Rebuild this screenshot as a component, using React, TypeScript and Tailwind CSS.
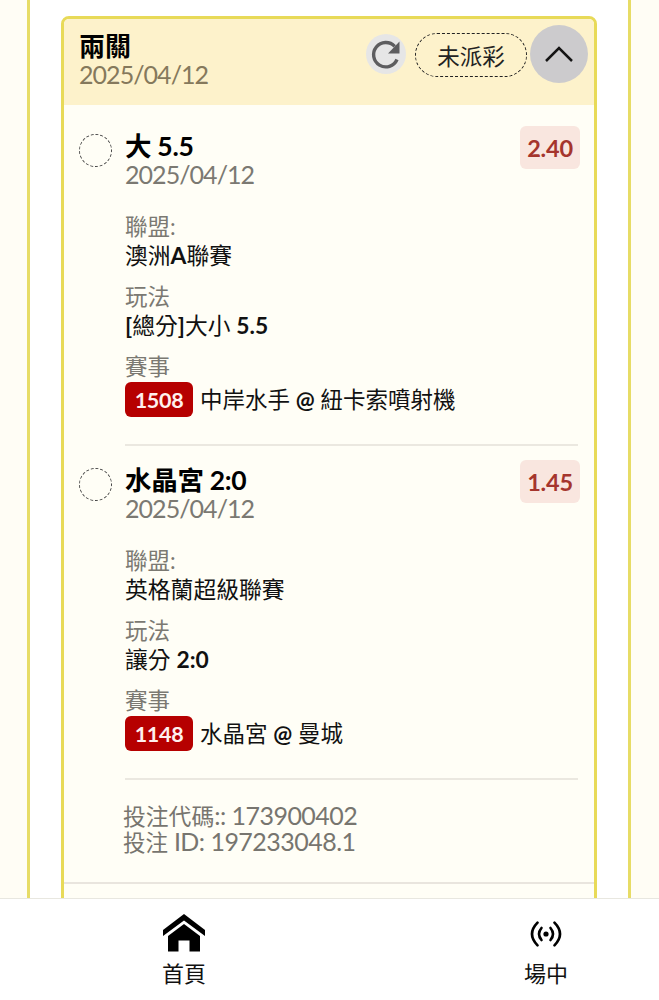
import type { ReactNode } from "react";

type Leg = {
    pick: ReactNode;
    date: string;
    odds: string;
    league: ReactNode;
    market: ReactNode;
    code: string;
    home: string;
    away: string;
};

const Num = ({ children }: { children: ReactNode }) => <span className="font-bold">{children}</span>;

const legs: Leg[] = [
    {
        pick: "大 5.5",
        date: "2025/04/12",
        odds: "2.40",
        league: <>澳洲<Num>A</Num>聯賽</>,
        market: <><Num>[</Num>總分<Num>]</Num>大小 <Num>5.5</Num></>,
        code: "1508",
        home: "中岸水手",
        away: "紐卡索噴射機",
    },
    {
        pick: "水晶宮 2:0",
        date: "2025/04/12",
        odds: "1.45",
        league: "英格蘭超級聯賽",
        market: <>讓分 <Num>2:0</Num></>,
        code: "1148",
        home: "水晶宮",
        away: "曼城",
    },
];

function Field({ label, children }: { label: string; children: ReactNode }) {
    return (
        <div className="text-[22.8px] leading-7">
            <div className="text-[22.5px] text-[#7b7972]">{label}</div>
            <div className="text-[#111]">{children}</div>
        </div>
    );
}

function BetLeg({ leg }: { leg: Leg }) {
    return (
        <section className="flex pr-[16px] pl-[15px]">
            <div className="mt-px h-[33px] w-[33px] shrink-0 rounded-full border border-dashed border-[#444]" />
            <div className="ml-[13px] flex-1 border-b-2 border-[#ebe8e0] pb-[27px]">
                <div className="-mt-px flex items-start justify-between">
                    <div>
                        <h3 className="text-[26.5px] leading-7 font-bold tracking-[-0.3px] text-black">{leg.pick}</h3>
                        <p className="text-[25px] leading-7 tracking-[-0.95px] text-[#7b7972]">{leg.date}</p>
                    </div>
                    <div className="-mt-[6px] -mr-[2px] flex h-[43px] w-[60px] items-center justify-center rounded-md bg-[#f9e6df] pt-[3px] text-[23.5px] font-bold tracking-[-0.2px] text-[#a5352d]">
                        {leg.odds}
                    </div>
                </div>
                <div className="mt-[25px] flex flex-col gap-[14px]">
                    <Field label="聯盟:">{leg.league}</Field>
                    <Field label="玩法">{leg.market}</Field>
                    <div className="text-[22.5px] leading-7">
                        <div className="text-[#7b7972]">賽事</div>
                        <div className="mt-px flex items-center text-[#111]">
                            <span className="mr-[7px] flex h-[35px] w-[68px] items-center justify-center rounded-md bg-[#b60000] text-[21.5px] font-bold tracking-[-0.3px] text-[#fff0ee]">
                                {leg.code}
                            </span>
                            <span className="pt-px">
                                {leg.home} <Num>@</Num> {leg.away}
                            </span>
                        </div>
                    </div>
                </div>
            </div>
        </section>
    );
}

function RefreshIcon() {
    return (
        <svg viewBox="0 0 40 40" className="h-10 w-10">
            <circle cx="20" cy="20" r="20" fill="#e6e6e6" />
            <path d="M28.7 12.3A12.200 12.200 0 1 0 31 25.5" fill="none" stroke="#5d5d5f" strokeWidth="3.400" />
            <path d="M33.500 7.5v12H22z" fill="#5d5d5f" />
        </svg>
    );
}

function HomeIcon() {
    return (
        <svg viewBox="0 0 42 38" className="h-[38px] w-[42px]">
            <path d="M21 0 42 16v6L21 6.5 0 22v-6z" />
            <path d="M21 10 37 22v15.500H26.500V26.500H15.500V37.500H5V22z" />
        </svg>
    );
}

function LiveIcon() {
    return (
        <svg viewBox="0 0 32 26" className="h-[26px] w-8" fill="none" stroke="#000" strokeWidth="2.600" strokeLinecap="round">
            <circle cx="16" cy="13" r="2.600" fill="#000" stroke="none" />
            <path d="M11.500 7Q6.500 13 11.500 19M20.500 7Q25.500 13 20.500 19" />
            <path d="M7.500 1.700Q-3.500 13 7.500 24.300M24.500 1.700Q35.500 13 24.500 24.300" />
        </svg>
    );
}

export default function App() {
    return (
        <div className="flex h-[1000px] w-[659px] flex-col overflow-hidden bg-[#fffdf5] font-['Lato','Noto_Sans_CJK_TC',sans-serif]">
            <main className="ml-[27px] h-[898px] w-[604px] shrink-0 overflow-hidden border-x-[3px] border-[#e7dc66] bg-white px-[31px] pt-[16px]">
                <article className="h-[950px] overflow-hidden rounded-t-lg border-[3px] border-[#e8da58] bg-[#fffef6]">
                    <header className="flex h-[86px] items-start justify-between bg-[#fdf2cb] pr-[6px] pl-[15px]">
                        <div className="pt-[13px]">
                            <h2 className="text-[26px] leading-7 font-bold text-black">兩關</h2>
                            <p className="text-[25px] leading-7 tracking-[-0.95px] text-[#85795c]">2025/04/12</p>
                        </div>
                        <div className="flex items-center pt-[6px]">
                            <RefreshIcon />
                            <span className="mt-[2px] ml-[9px] flex h-[44px] w-[112px] items-center justify-center rounded-full border border-dashed border-[#222] pt-[3px] text-[22.5px] text-[#222]">
                                未派彩
                            </span>
                            <button className="ml-[3px] flex h-[58px] w-[58px] items-center justify-center rounded-full bg-[#cccbcd]">
                                <svg viewBox="0 0 28 16" className="h-4 w-7" fill="none" stroke="#151515" strokeWidth="2.500">
                                    <path d="M1 15 14 2l13 13" />
                                </svg>
                            </button>
                        </div>
                    </header>

                    <div className="flex flex-col gap-[21px] pt-[28px]">
                        {legs.map((leg) => (
                            <BetLeg key={leg.code} leg={leg} />
                        ))}
                    </div>

                    <div className="border-b-2 border-[#e9e5de] pt-[22px] pb-[28px] pl-[59px] text-[25px] leading-[26px] tracking-[-0.53px] text-[#77756f]">
                        <p className="h-[26px]"><span className="text-[22.8px] tracking-normal">投注代碼</span>:: 173900402</p>
                        <p className="h-[26px]"><span className="text-[22.5px] tracking-normal">投注</span> ID: 197233048.1</p>
                    </div>
                </article>
            </main>

            <nav className="flex flex-1 border-t border-[#e8e7e0] bg-white text-[22px] leading-7 text-[#111]">
                <a className="flex w-[368px] shrink-0 flex-col items-center pt-[15px]">
                    <HomeIcon />
                    <span className="mt-[8px]">首頁</span>
                </a>
                <a className="flex w-[356px] shrink-0 flex-col items-center pt-[22px]">
                    <LiveIcon />
                    <span className="mt-[13px]">場中</span>
                </a>
            </nav>
        </div>
    );
}
